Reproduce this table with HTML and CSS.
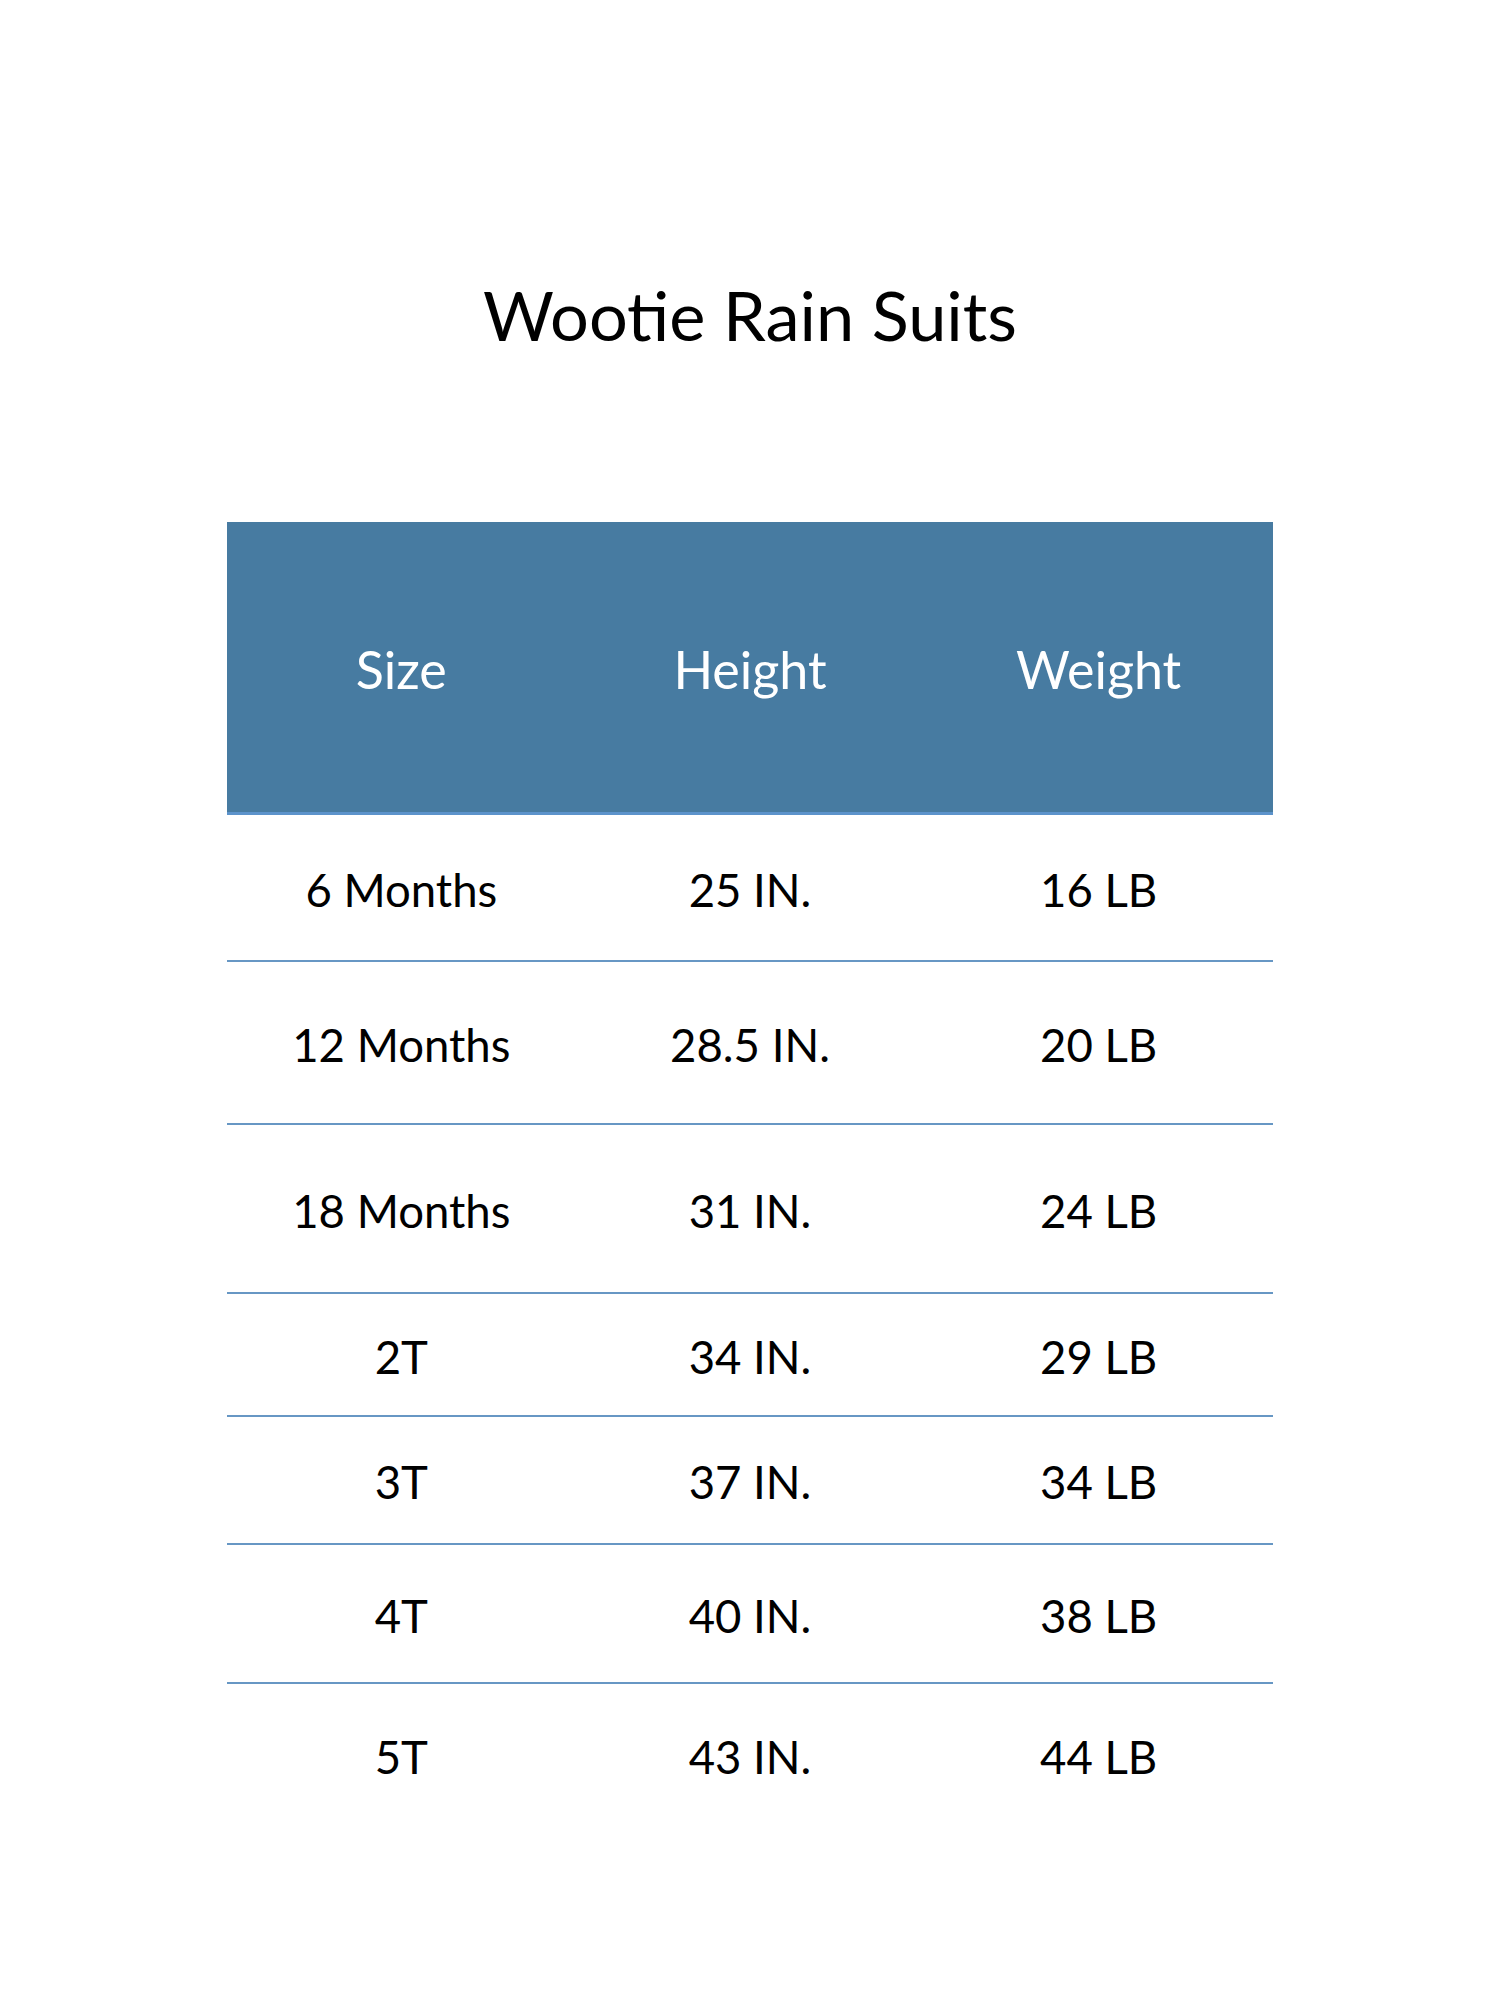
FILE: index.html
```html
<!DOCTYPE html>
<html lang="en">
<head>
<meta charset="utf-8">
<title>Wootie Rain Suits</title>
<link rel="stylesheet" href="styles.css">
</head>
<body>
<main class="page">
  <h1 class="title">Wootie Rain Suits</h1>
  <section class="chart">
    <div class="chart-head">
      <div class="cell">Size</div>
      <div class="cell">Height</div>
      <div class="cell">Weight</div>
    </div>
    <div class="chart-row">
      <div class="cell">6 Months</div>
      <div class="cell">25 IN.</div>
      <div class="cell">16 LB</div>
    </div>
    <div class="chart-row">
      <div class="cell">12 Months</div>
      <div class="cell">28.5 IN.</div>
      <div class="cell">20 LB</div>
    </div>
    <div class="chart-row">
      <div class="cell">18 Months</div>
      <div class="cell">31 IN.</div>
      <div class="cell">24 LB</div>
    </div>
    <div class="chart-row">
      <div class="cell">2T</div>
      <div class="cell">34 IN.</div>
      <div class="cell">29 LB</div>
    </div>
    <div class="chart-row">
      <div class="cell">3T</div>
      <div class="cell">37 IN.</div>
      <div class="cell">34 LB</div>
    </div>
    <div class="chart-row">
      <div class="cell">4T</div>
      <div class="cell">40 IN.</div>
      <div class="cell">38 LB</div>
    </div>
    <div class="chart-row">
      <div class="cell">5T</div>
      <div class="cell">43 IN.</div>
      <div class="cell">44 LB</div>
    </div>
  </section>
</main>
</body>
</html>
```

FILE: styles.css
```css
html, body {
  margin: 0;
  padding: 0;
  background: #ffffff;
}

body {
  font-family: Lato, "Open Sans", "Liberation Sans", sans-serif;
  color: #000000;
}

.page {
  width: 1500px;
  min-height: 2000px;
  padding-top: 281px;
  box-sizing: border-box;
}

.title {
  margin: 0;
  font-size: 68.5px;
  line-height: 1;
  font-weight: 400;
  text-align: center;
  color: #000000;
}

.chart {
  width: 1046px;
  margin: 172.5px auto 0;
}

.chart-head,
.chart-row {
  display: grid;
  grid-template-columns: repeat(3, 1fr);
  align-items: center;
  box-sizing: border-box;
}

.cell {
  text-align: center;
  line-height: 1;
}

.chart-head {
  height: 293px;
  padding-top: 4px;
  background: #477ba1;
  border-bottom: 3px solid #5c93cb;
  color: #ffffff;
  font-size: 52px;
}

.chart-row {
  font-size: 45.5px;
  border-bottom: 2px solid #6797c4;
  padding-top: 4px;
}

.chart-row:nth-child(2) { height: 147px; }
.chart-row:nth-child(3) { height: 163px; }
.chart-row:nth-child(4) { height: 169px; }
.chart-row:nth-child(5) { height: 123px; }
.chart-row:nth-child(6) { height: 128px; }
.chart-row:nth-child(7) { height: 139px; }
.chart-row:nth-child(8) {
  height: 145px;
  padding-top: 0;
  border-bottom: none;
}
```
